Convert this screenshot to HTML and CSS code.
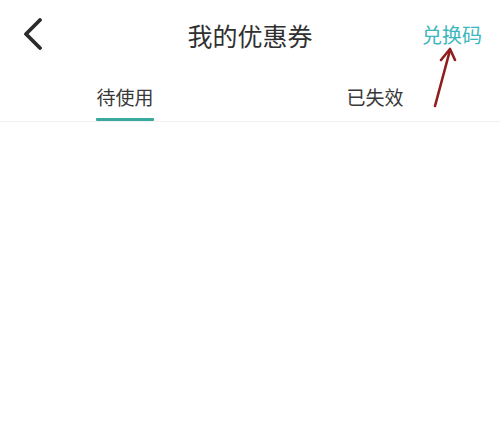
FILE: index.html
```html
<!DOCTYPE html>
<html lang="zh">
<head>
<meta charset="utf-8">
<link rel="stylesheet" href="styles.css">
</head>
<body>
<div class="page">
  <header class="nav">
    <div class="back">
      <svg width="22" height="32" viewBox="0 0 22 32"><polyline points="18,2 4,16 18,30" fill="none" stroke="#2b2b2b" stroke-width="3.8" stroke-linecap="round" stroke-linejoin="round"/></svg>
    </div>
    <h1 class="title">我的优惠券</h1>
    <div class="action">兑换码</div>
  </header>
  <nav class="tabs">
    <div class="tab active"><span class="label">待使用</span><span class="bar"></span></div>
    <div class="tab"><span class="label">已失效</span><span class="bar"></span></div>
  </nav>
  <main class="content"></main>
  <svg class="arrow" width="500" height="440" viewBox="0 0 500 440">
    <line x1="435" y1="106" x2="449.5" y2="52" stroke="#8e1f1c" stroke-width="2.6" stroke-linecap="round"/>
    <polyline points="441,60 450,49 455,60" fill="none" stroke="#8e1f1c" stroke-width="2.6" stroke-linecap="round" stroke-linejoin="round"/>
  </svg>
</div>
</body>
</html>
```
FILE: styles.css
```css
* { box-sizing: border-box; }
html, body { margin: 0; padding: 0; background: #fff; }
body {
  font-family: "Noto Sans CJK SC", "Noto Sans", sans-serif;
  color: #333;
  width: 500px;
  height: 440px;
  overflow: hidden;
}
.page { position: relative; width: 500px; height: 440px; }
.nav {
  height: 70px;
  display: grid;
  grid-template-columns: 1fr auto 1fr;
  align-items: center;
}
.back { padding-left: 22px; display: flex; align-items: center; margin-top: -2px; }
.back svg { display: block; }
.title {
  margin: 0;
  font-size: 25px;
  line-height: 1;
  font-weight: 400;
  color: #303030;
}
.action {
  justify-self: end;
  padding-right: 18px;
  font-size: 20px;
  line-height: 1;
  color: #3db7bd;
}
.tabs {
  display: flex;
  height: 52px;
  border-bottom: 1px solid #f1f1f1;
}
.tab {
  flex: 1;
  display: flex;
  flex-direction: column;
  align-items: center;
  padding-top: 17px;
}
.label {
  font-size: 19px;
  line-height: 1;
  color: #383838;
}
.bar {
  margin-top: 12px;
  width: 58px;
  height: 3px;
  border-radius: 1px;
}
.tab.active .bar { background: #3aa99d; }
.content { height: 318px; }
.arrow { position: absolute; left: 0; top: 0; pointer-events: none; }
```
